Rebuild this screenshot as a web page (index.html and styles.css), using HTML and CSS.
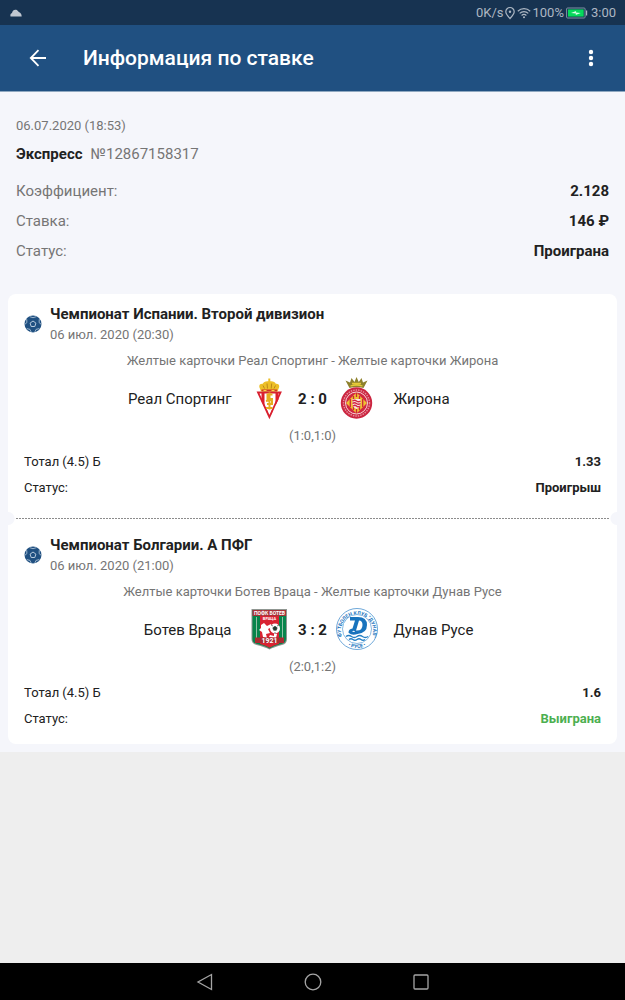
FILE: index.html
```html
<!DOCTYPE html>
<html lang="ru">
<head>
<meta charset="utf-8">
<meta name="viewport" content="width=device-width, initial-scale=1">
<title>Информация по ставке</title>
<link rel="stylesheet" href="styles.css">
</head>
<body>
<svg width="0" height="0" class="defs" aria-hidden="true">
  <symbol id="ball" viewBox="0 0 18 18">
    <circle cx="9" cy="9" r="8.500" fill="#205081"/>
    <path d="M9 6l2.900 2.100-1.100 3.400H7.200L6.100 8.100z" fill="none" stroke="#b9cbdd" stroke-width="1"/>
    <path d="M5.500 1.600L9 2.700l3.500-1.100M15.300 4.200l-.2 3.400 2.300 1.900M15.200 13.600l-3.200.8-1.300 2.900M7.300 17.300L6 14.400l-3.200-.8M.6 9.500l2.300-1.900-.2-3.400" fill="none" stroke="#b9cbdd" stroke-width=".8"/>
  </symbol>
</svg>
<div class="screen">
  <div class="status">
    <svg class="cloud" width="12" height="8" viewBox="0 0 12 8"><path d="M.5 7.500C0 5.500.8 4.300 2 4 2.300 1.500 4.500.300 6 .8c1.500.3 1.800 1.500 2.800 2.200 2 .7 2.900 2.500 2.900 4.500z" fill="#c0c7d1"/></svg>
    <div class="tray">
      <span>0K/s</span>
      <svg width="12" height="14" viewBox="0 0 12 14" fill="none" stroke="#adb7c3" stroke-width="1.200"><path d="M6 12.500C3.500 9.800 1.800 7.800 1.800 5.700a4.200 4.200 0 0 1 8.400 0c0 2.100-1.700 4.100-4.200 6.800z"/><circle cx="6" cy="5.800" r="1.200" fill="#adb7c3" stroke="none"/></svg>
      <svg width="14" height="12" viewBox="0 0 14 12" fill="none" stroke="#adb7c3" stroke-width="1.200"><path d="M.8 4.200a9 9 0 0 1 12.400 0M2.700 6.400a6.200 6.200 0 0 1 8.600 0M4.600 8.500a3.500 3.500 0 0 1 4.800 0"/><circle cx="7" cy="10.300" r="1" fill="#adb7c3" stroke="none"/></svg>
      <span>100%</span>
      <svg class="battery" width="22" height="12" viewBox="0 0 22 12"><rect x=".6" y="1" width="18.500" height="10" rx="1" fill="none" stroke="#7f95a5"/><rect x="2" y="2.400" width="15.700" height="7.200" fill="#05d95b"/><path d="M5 5.900l5.200-1.900-.3 1.500 4.800.5-5 2 .2-1.500z" fill="#d8ffe6"/><path d="M20.600 3.500v5" stroke="#adb7c3" stroke-width="1.200"/></svg>
      <span>3:00</span>
    </div>
  </div>
  <header class="appbar">
    <button class="icon-btn" aria-label="Назад"><svg width="18" height="18" viewBox="0 0 18 18" fill="none" stroke="#fff" stroke-width="1.800"><path d="M17 9H2M9.500 1.200L1.800 9l7.700 7.800"/></svg></button>
    <h1>Информация по ставке</h1>
    <button class="icon-btn" aria-label="Ещё"><svg width="6" height="18" viewBox="0 0 6 18" fill="#fff"><circle cx="3" cy="3" r="2.200"/><circle cx="3" cy="9" r="2.200"/><circle cx="3" cy="15" r="2.200"/></svg></button>
  </header>
  <main class="coupon">
    <section class="summary">
      <p class="date">06.07.2020 (18:53)</p>
      <p class="kind"><strong>Экспресс</strong><span>№12867158317</span></p>
      <dl class="totals">
        <div><dt>Коэффициент:</dt><dd>2.128</dd></div>
        <div><dt>Ставка:</dt><dd>146 ₽</dd></div>
        <div><dt>Статус:</dt><dd>Проиграна</dd></div>
      </dl>
    </section>
    <section class="card">
      <article class="leg">
        <div class="league">
          <svg width="18" height="18"><use href="#ball"/></svg>
          <div><h2>Чемпионат Испании. Второй дивизион</h2><p class="date">06 июл. 2020 (20:30)</p></div>
        </div>
        <p class="market">Желтые карточки Реал Спортинг - Желтые карточки Жирона</p>
        <div class="match">
          <span class="home">Реал Спортинг</span>
          <svg width="44" height="44" viewBox="0 0 44 44">
            <path d="M11 15.500h22.500L22.400 40z" fill="#fff" stroke="#d8202f" stroke-width="1.800"/>
            <path d="M14.500 16h3v14l-3-6.300zM28.500 16h3v6.500l-3 6zM18.500 30l2 4v4zM26.500 30l-2 4v4z" fill="#dc1f2d"/>
            <path d="M25.500 17.500h-5v4.500h4.500v5h-5M22.500 15.500v17M19 31h6.500M19 24l7-1.500" fill="none" stroke="#e5ad20" stroke-width="2"/>
            <path d="M14 14.500l-1.700-4.500q-.3-3.500 3.500-3.200 1-2.800 5.500-2.500V1.500h2v2.800q4.500-.3 5.500 2.500 3.700-.3 3.400 3.200L30.500 14.500z" fill="#edbf28"/>
            <path d="M14.500 12.500h15.600v2H14.500z" fill="#cf3025"/>
            <path d="M16 8.500l1.500 3M20 6.500l.5 5M24.700 6.500l-.5 5M28.500 8.500L27 11.500" stroke="#b68219" stroke-width=".9"/>
            <path d="M16.500 13.500h3M24.500 13.500h3" stroke="#f7d64b"/>
          </svg>
          <strong class="score">2 : 0</strong>
          <svg width="44" height="44" viewBox="0 0 44 44">
            <path d="M14.500 11L10.500 3.500l4.500 2L16.500 1l3 4L21.500 0l2.300 5L26.500 1l1.500 4.500 4.500-2L28.500 11q-7-2-14 0z" fill="#8e812c"/>
            <path d="M15.500 9q6-2 12 0M17 6.500h9" fill="none" stroke="#e7ca38" stroke-width="1.300"/>
            <circle cx="21.500" cy="26" r="15.700" fill="#cb2540"/>
            <circle cx="21.500" cy="26" r="13" fill="none" stroke="#e58d9b" stroke-width="1.500" stroke-dasharray="1.500 1"/>
            <circle cx="21.500" cy="26" r="11" fill="#d22640" stroke="#fff" stroke-width=".8"/>
            <path d="M21.500 15.500L32 26 21.500 36.500 11 26z" fill="#eec134"/>
            <path d="M18.500 19v14M24.500 19v14M21.500 16v4M21.500 32v4M15.300 22v8M27.700 22v8" stroke="#cd2638" stroke-width="1.300"/>
            <path d="M17.500 22h8v4.500q0 4-4 5.500-4-1.500-4-5.500z" fill="#fbe5e5"/>
            <path d="M17.500 24q2-1.500 4 0t4 0M17.500 26.500q2-1.500 4 0t4 0M18.200 29q1.800-1.500 3.300 0t3.300 0" fill="none" stroke="#d22640" stroke-width="1.300"/>
          </svg>
          <span>Жирона</span>
        </div>
        <p class="halves">(1:0,1:0)</p>
        <dl class="rows">
          <div><dt>Тотал (4.5) Б</dt><dd>1.33</dd></div>
          <div><dt>Статус:</dt><dd>Проигрыш</dd></div>
        </dl>
      </article>
      <div class="tear"></div>
      <article class="leg">
        <div class="league">
          <svg width="18" height="18"><use href="#ball"/></svg>
          <div><h2>Чемпионат Болгарии. А ПФГ</h2><p class="date">06 июл. 2020 (21:00)</p></div>
        </div>
        <p class="market">Желтые карточки Ботев Враца - Желтые карточки Дунав Русе</p>
        <div class="match">
          <span class="home">Ботев Враца</span>
          <svg width="44" height="44" viewBox="0 0 44 44">
            <path d="M4.500 1h35.500v30q0 5-5 6-8 2-12.500 4.500Q18 39 9.500 37q-5-1-5-6z" fill="#8f9691"/>
            <path d="M5.500 2h33.500v29q0 4-4.500 5-7.500 1.800-12 4.500-4.500-2.700-12.500-4.500-4.500-1-4.500-5z" fill="#07844b"/>
            <path d="M13 2h19v34q-6 1.500-9.500 3.800Q19 37.500 13 36z" fill="#d92332"/>
            <path d="M5.500 2h33.500v6H5.500z" fill="#a83239"/>
            <path d="M9.500 9v22M35.500 9v22" stroke="#cfdad0" stroke-width=".7"/>
            <text x="22.500" y="7" class="crest-s">ПОФК БОТЕВ</text>
            <text x="22.500" y="12" class="crest-xs">ВРАЦА</text>
            <path d="M14 17l3-2 3 3 4-2 1 3-4 2 2 4-4 1 1 4-4-1-1-5-3-2 2-2zM23 27l4 1v-3l3 1-1 4-7-1z" fill="#fff"/>
            <circle cx="28" cy="20.500" r="5" fill="#fff"/>
            <path d="M28 18.200l2.200 1.600-.9 2.500h-2.600l-.9-2.500zM24 17l2 1M32 17l-2 1M28 24v2" fill="#243a31" stroke="#243a31" stroke-width=".6"/>
            <path d="M8 29.500h29V35H8z" fill="#a92b31"/>
            <text x="22.500" y="34.800" class="crest-l">1921</text>
          </svg>
          <strong class="score">3 : 2</strong>
          <svg width="44" height="44" viewBox="0 0 44 44">
            <circle cx="22" cy="21" r="20.500" fill="#fff" stroke="#4a92cf" stroke-width=".8"/>
            <path id="ring" d="M8.600 31.700A16.100 16.100 0 1 1 35.400 31.700" fill="none"/>
            <path id="base" d="M12.500 37.500A19.200 19.200 0 0 0 31.500 37.500" fill="none"/>
            <text class="crest-ring"><textPath href="#ring" startOffset="50%">ФУТБОЛЕН КЛУБ "ДУНАВ"</textPath></text>
            <text class="crest-ring"><textPath href="#base" startOffset="50%">• РУСЕ •</textPath></text>
            <circle cx="22" cy="21" r="14.500" fill="#fff" stroke="#6aa7da" stroke-width=".8"/>
            <path d="M15 9h8q9 0 9 8T22.500 26q-5.500 2-9-1.200 0-3.800 4-4.300l2.500-8h-5zM24 12.500l-3 10q6.500.5 6.500-5.500 0-4.500-3.500-4.500zM17 23.200q1.500 1.200 3 .5-1-1.500-3-.5z" fill="#1873bd" fill-rule="evenodd"/>
            <path d="M11 28.500q2.700-2 5.500 0t5.500 0 5.500 0 5.500 0M14 31.500q2-1.500 4 0t4 0 4 0 4 0" fill="none" stroke="#2580c5" stroke-width="1.400"/>
          </svg>
          <span>Дунав Русе</span>
        </div>
        <p class="halves">(2:0,1:2)</p>
        <dl class="rows">
          <div><dt>Тотал (4.5) Б</dt><dd>1.6</dd></div>
          <div><dt>Статус:</dt><dd class="won">Выиграна</dd></div>
        </dl>
      </article>
    </section>
  </main>
  <nav class="sysnav">
    <button aria-label="Назад"><svg width="18" height="18" viewBox="0 0 18 18"><path d="M15.500 1.500v15L2 9z"/></svg></button>
    <button aria-label="Домой"><svg width="18" height="18" viewBox="0 0 18 18"><circle cx="9" cy="9" r="7.800"/></svg></button>
    <button aria-label="Недавние"><svg width="18" height="18" viewBox="0 0 18 18"><rect x="2" y="2" width="14" height="14" rx="1"/></svg></button>
  </nav>
</div>
</body>
</html>
```

FILE: styles.css
```css
* { box-sizing: border-box; }
body, h1, h2, p, dl, dd { margin: 0; }
body {
  background: #eee;
  color: #212121;
  font: 15px/20px Roboto, "Noto Sans", sans-serif;
}
svg { display: block; flex: none; }
.defs { position: absolute; }
button {
  display: grid;
  place-items: center;
  border: 0;
  padding: 0;
  background: none;
}
.screen { display: flex; flex-direction: column; min-height: 100vh; }

.status {
  display: flex;
  align-items: center;
  justify-content: space-between;
  height: 25px;
  padding: 0 9px 0 10px;
  background: #173351;
  color: #adb7c3;
  font-size: 13px;
}
.tray { display: flex; align-items: center; gap: 1px; }
.battery { margin: 0 2px 0 1px; }

.appbar {
  display: flex;
  align-items: center;
  height: 67px;
  padding: 0 14px 0 18px;
  background: #205081;
  border-bottom: 1px solid #8fa8c0;
  color: #fff;
}
.appbar h1 { flex: 1; padding-left: 25px; font-size: 21px; line-height: 28px; font-weight: 500; }
.icon-btn { width: 40px; height: 40px; }

.coupon { padding: 24px 8px 8px; background: #f5f6fb; }
.summary { padding: 0 8px 28px; color: #757575; }
.date, .market, .halves, .rows { font-size: 13px; }
.date, .market, .halves { color: #757575; }
.kind { display: flex; gap: 8px; margin: 8px 0 12px; }
.kind strong, .totals dd { color: #212121; font-weight: 700; }
.totals div, .rows div { display: flex; justify-content: space-between; }
.totals div { line-height: 30px; }

.card { background: #fff; border-radius: 8px; }
.leg { padding: 9px 16px 17px; }
.tear + .leg { padding: 15px 16px 12px; }
.league { display: flex; align-items: center; gap: 8px; }
.league h2 { font-size: 15px; line-height: 22px; font-weight: 700; }
.market { margin: 6px 0; text-align: center; }
.match {
  display: grid;
  grid-template-columns: 1fr 44px 44px 44px 1fr;
  align-items: center;
}
.match span { padding: 0 15px; }
.home { text-align: right; }
.score { text-align: center; font-weight: 700; }
.halves { margin: 5px 0 3px; text-align: center; }
.rows div { line-height: 26px; }
.rows dd { font-weight: 700; }
.rows .won { color: #4caf50; }
.tear {
  height: 13px;
  margin: -6px 0;
  background:
    radial-gradient(circle at 0 50%, #f5f6fb 6px, transparent 7px),
    radial-gradient(circle at 100% 50%, #f5f6fb 6px, transparent 7px),
    repeating-linear-gradient(90deg, #8c8c8c 0 2px, #fff 2px 3px) 8px 6px / calc(100% - 16px) 1px no-repeat;
}

.crest-s, .crest-xs, .crest-l, .crest-ring {
  font-family: Roboto, sans-serif;
  font-weight: 700;
  text-anchor: middle;
  fill: #fff;
}
.crest-s { font-size: 5px; }
.crest-xs { font-size: 4px; }
.crest-l { font-size: 7px; }
.crest-ring { font-size: 5px; fill: #1873bd; }

.sysnav {
  display: flex;
  justify-content: center;
  gap: 90px;
  height: 37px;
  margin-top: auto;
  background: #000;
}
.sysnav svg { fill: none; stroke: #a5a5a5; stroke-width: 1.3; }
```
